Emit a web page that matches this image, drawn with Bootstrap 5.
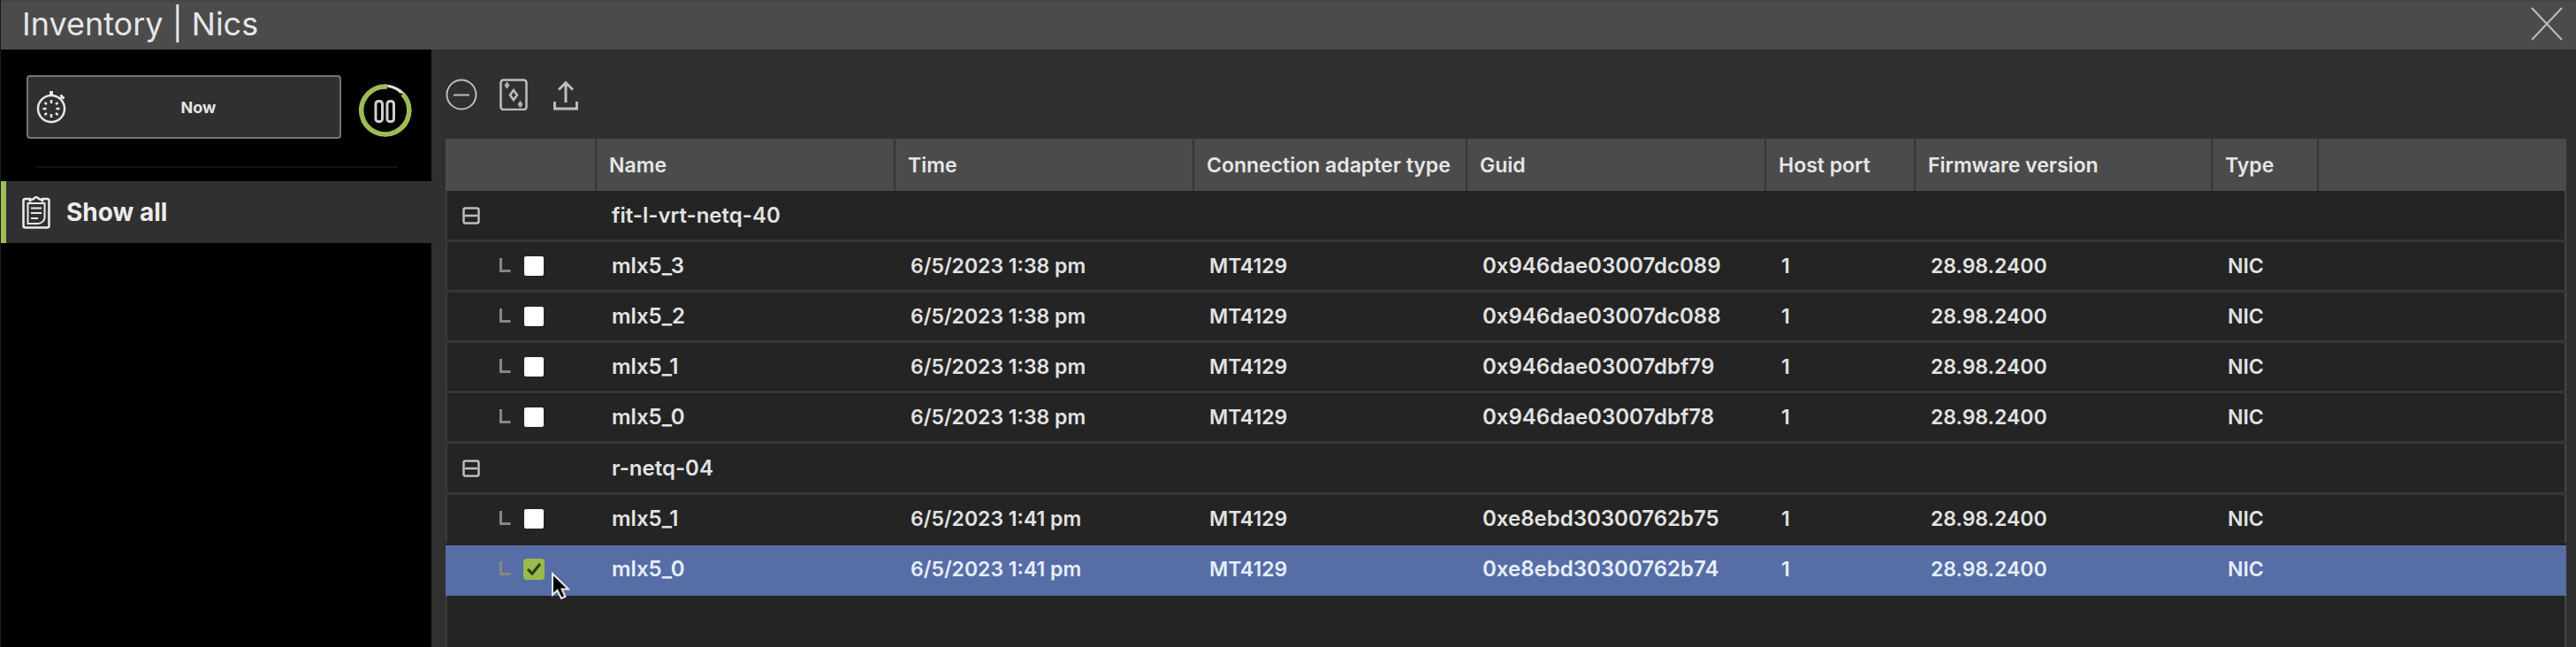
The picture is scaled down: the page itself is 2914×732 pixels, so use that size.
<!DOCTYPE html>
<html lang="en">
<head>
<meta charset="utf-8">
<meta name="viewport" content="width=device-width, initial-scale=1">
<title>Inventory | Nics</title>
<link rel="stylesheet" href="https://cdn.jsdelivr.net/npm/bootstrap@5.3.0/dist/css/bootstrap.min.css">
<style>
  body { background: #303030; color: #e2e2e2; font-family: Inter, "Open Sans", sans-serif; }
  svg { display: block; fill: none; stroke: currentColor; flex: none; }
  .app { border-left: 1px solid #1c1c1c; }
  .titlebar { height: 56px; background: #4b4b4b; border-top: 2px solid #444; padding: 0 15px 4px 24px; }
  .titlebar h1 { font-size: 36px; line-height: 44px; font-weight: 400; color: #e6e6e6; }
  .plain { border: 0; padding: 0; background: none; color: #bdbdbd; }
  .side { width: 487px; background: #000; }
  .clock-row { padding: 29px 22px 0 29px; gap: 20px; }
  .time-btn { height: 72px; background: #303030; border: 2px solid #757575; border-radius: 4px; color: #e6e6e6; padding: 0 10px 0 9px; font-size: 18px; font-weight: 700; }
  .rule { height: 2px; margin: 31px 38px 15px 40px; background: #121212; border: 0; opacity: 1; }
  .side-link { height: 70px; background: #303030; border-left: 6px solid #a0bd56; padding-left: 18px; gap: 18px; color: #ececec; font-size: 28px; font-weight: 700; text-decoration: none; }
  .side-link:hover { color: #fff; }
  .pane { padding: 0 11px 0 16px; min-width: 0; }
  .tools { height: 101px; gap: 23px; }
  .grid-area { background: #242424; box-shadow: inset 2px 0 #393939, inset -2px 0 #464646; }
  .nic-grid { width: 100%; table-layout: fixed; border-collapse: separate; border-spacing: 0; font-size: 23px; font-weight: 600; line-height: 28px; white-space: nowrap; }
  .nic-grid th { height: 59px; background: #4b4b4b; border-right: 2px solid #363636; padding: 0 0 0 14px; font-weight: 600; color: #e6e6e6; }
  .nic-grid th:last-child { border-right: 0; }
  .nic-grid td { height: 57px; padding: 0 0 0 17px; border-bottom: 3px solid #363636; }
  .nic-grid .host td { height: 58px; }
  .nic-grid .wide { font-size: 24px; }
  .nic-grid .before-picked td { border-bottom-color: #242424; }
  .nic-grid .picked td { background: #566da6; border-bottom-color: #566da6; color: #e6edf9; }
  .nic-grid .tree { padding-left: 19px; position: relative; }
  .branch { color: #858585; margin-left: 42px; }
  .tick { appearance: none; width: 22px; height: 22px; margin: 0 0 0 15px; background: #fff; border-radius: 2px; }
  .tick:checked { width: 24px; height: 24px; margin-left: 14px; border-radius: 4px; background: #9aba4b url("data:image/svg+xml,%3Csvg xmlns='http://www.w3.org/2000/svg' viewBox='0 0 24 24' fill='none' stroke='%232c3a16' stroke-width='3'%3E%3Cpath d='M5 12l5 5L19 6'/%3E%3C/svg%3E"); }
  .pointer { position: absolute; left: 119px; top: 30px; z-index: 2; }
</style>
<script src="https://cdn.jsdelivr.net/npm/bootstrap@5.3.0/dist/js/bootstrap.bundle.min.js"></script>
</head>
<body>
<div class="app d-flex flex-column min-vh-100">
  <header class="titlebar d-flex align-items-center justify-content-between">
    <h1 class="m-0">Inventory | Nics</h1>
    <button type="button" class="plain" aria-label="Close">
      <svg width="36" height="40" viewBox="0 0 36 40" stroke-width="2"><path d="M1 2L35 38M35 2L1 38"/></svg>
    </button>
  </header>
  <div class="d-flex flex-fill">
    <aside class="side flex-shrink-0">
      <div class="clock-row d-flex align-items-end">
        <button type="button" class="time-btn d-flex align-items-center flex-fill">
          <svg width="34" height="38" viewBox="0 0 34 38" stroke="#bcbcbc" stroke-width="2.500"><circle cx="17" cy="21" r="15"/><path d="M17 1v5" stroke-width="4"/><path d="M27 10l3-3M27.500 5.500l4 4M17 11v4M17 27v4M7.500 21h4M22.500 21h4M9.500 14l2.500 2M22 26l2.500 2M24.500 14l-2.500 2M12 26l-2.500 2"/></svg>
          <span class="flex-fill text-center">Now</span>
        </button>
        <button type="button" class="plain" aria-label="Pause">
          <svg width="60" height="64" viewBox="0 0 60 64"><circle cx="30" cy="32" r="28" stroke="#c0cba4" stroke-width="2.500"/><path d="M49.500 13.500A27 27 0 1 1 32 5" stroke="#9fbb55" stroke-width="5.500"/><path d="M33 4.500Q42 6 48 12" stroke="#e4e8dc" stroke-width="2.500"/><g stroke="#cfcfcf" stroke-width="3"><rect x="19" y="21.500" width="7.500" height="23" rx="3"/><rect x="32" y="21.500" width="7.500" height="23" rx="3"/></g></svg>
        </button>
      </div>
      <hr class="rule">
      <nav>
        <a href="#" class="side-link d-flex align-items-center" aria-current="page">
          <svg width="32" height="38" viewBox="0 0 32 38" stroke="#a8a8a8" stroke-width="2.500"><path d="M10 4H3.500Q1.500 4 1.500 6V34.500Q1.500 36.500 3.500 36.500H28.500Q30.500 36.500 30.500 34.500V6Q30.500 4 28.500 4H22"/><path d="M9 7.500V5.500L13 4Q16 0 19 4L23 5.500V7.500" /><path d="M6.500 9H25.500V25Q25 31 18 32H6.500ZM10 14.500H22M10 20H22M10 26H18" stroke-width="2"/></svg>
          <span>Show all</span>
        </a>
      </nav>
    </aside>
    <main class="pane d-flex flex-column flex-fill">
      <div class="tools d-flex align-items-center">
        <button type="button" class="plain" aria-label="Collapse all"><svg width="36" height="36" viewBox="0 0 36 36" stroke-width="2"><circle cx="18" cy="18" r="16.500"/><path d="M9 18.500h18"/></svg></button>
        <button type="button" class="plain" aria-label="Open card"><svg width="36" height="36" viewBox="0 0 36 36" stroke-width="2.500" stroke="#aeaeae"><rect x="3.500" y="1.500" width="29" height="33.500" rx="3"/><path d="M18 13l4 5.500-4 5.500-4-5.500z"/><path d="M10.500 4l2.500 3.500-2.500 3.500-2.500-3.500zM25.500 25.500l2.500 3.500-2.500 3.500-2.500-3.500z" fill="#aeaeae" stroke-width="1"/></svg></button>
        <button type="button" class="plain" aria-label="Export"><svg width="36" height="36" viewBox="0 0 36 36" stroke="#c8c8c8" stroke-width="3"><path d="M18 27V5M10 12.500L18 4.500l8 8M5.500 26v8h25v-8"/></svg></button>
      </div>
      <div class="grid-area flex-fill">
        <table class="nic-grid">
          <colgroup><col width="171"><col width="338"><col width="338"><col width="309"><col width="338"><col width="169"><col width="336"><col width="120"><col></colgroup>
          <thead><tr><th></th><th scope="col">Name</th><th scope="col">Time</th><th scope="col">Connection adapter type</th><th scope="col">Guid</th><th scope="col">Host port</th><th scope="col">Firmware version</th><th scope="col">Type</th><th></th></tr></thead>
          <tbody id="rows"></tbody>
        </table>
      </div>
    </main>
  </div>
</div>
<script>
  const hosts = [
    { name: 'fit-l-vrt-netq-40', time: '6/5/2023 1:38 pm', nics: [['mlx5_3', '0x946dae03007dc089'], ['mlx5_2', '0x946dae03007dc088'], ['mlx5_1', '0x946dae03007dbf79'], ['mlx5_0', '0x946dae03007dbf78']] },
    { name: 'r-netq-04', time: '6/5/2023 1:41 pm', nics: [['mlx5_1', '0xe8ebd30300762b75'], ['mlx5_0', '0xe8ebd30300762b74']] }
  ];
  const picked = '0xe8ebd30300762b74';
  const pointer = '<svg class="pointer" width="22" height="32" viewBox="0 0 22 32"><path d="M2 2V26L7.500 21L12 30L16.500 28L12.500 19.500H20Z" fill="#000" stroke="#e8e8e8" stroke-width="2"/></svg>';
  let html = '';
  for (const h of hosts) {
    html += `<tr class="host"><td class="tree"><button type="button" class="plain d-block" aria-label="Collapse ${h.name}"><svg width="20" height="20" viewBox="0 0 20 20" stroke="#c0c0c0" stroke-width="2.500"><rect x="1.500" y="1.500" width="17" height="17" rx="2"/><path d="M3 10h14"/></svg></button></td><td class="wide">${h.name}</td><td colspan="7"></td></tr>`;
    h.nics.forEach(([nic, guid], i) => {
      const on = guid === picked, next = h.nics[i + 1];
      const cls = on ? 'picked' : next && next[1] === picked ? 'before-picked' : '';
      html += `<tr class="${cls}"><td class="tree"><div class="d-flex align-items-center"><svg class="branch" width="13" height="20" viewBox="0 0 13 20" stroke-width="3"><path d="M1.500 1V15.500H12.500"/></svg><input type="checkbox" class="tick" aria-label="Select ${nic}"${on ? ' checked' : ''}></div>${on ? pointer : ''}</td><td class="wide">${nic}</td><td>${h.time}</td><td>MT4129</td><td class="wide">${guid}</td><td>1</td><td>28.98.2400</td><td>NIC</td><td></td></tr>`;
    });
  }
  document.getElementById('rows').innerHTML = html;
</script>
</body>
</html>
